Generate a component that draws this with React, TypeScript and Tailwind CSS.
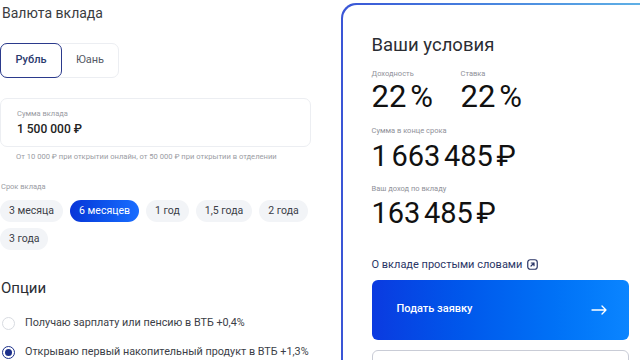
import React from "react";

const chips = ["3 месяца", "6 месяцев", "1 год", "1,5 года", "2 года", "3 года"];

export default function App() {
  return (
    <div
      className="w-[640px] h-[360px] overflow-hidden bg-white flex items-start text-[#2b2d33]"
      style={{ fontFamily: "Roboto, 'Noto Sans', sans-serif" }}
    >
      {/* Left column */}
      <div className="w-[312px] shrink-0 flex flex-col [&>*]:shrink-0">
        <div className="mt-[3px] ml-[2px] text-[14px] leading-[20px] text-[#3a3b40]">Валюта вклада</div>
        <div className="mt-[20px] flex w-[119px] h-[35px] rounded-[7px] border border-[#eceef2]">
          <div className="w-[62px] h-[35px] -mt-px -ml-px rounded-[7px] border-[1.5px] border-[#2b3a8c] flex items-center justify-center text-[11px] font-medium text-[#2a3a6e]">
            Рубль
          </div>
          <div className="flex-1 flex items-center justify-center text-[11px] text-[#555a66]">Юань</div>
        </div>
        <div className="mt-[20px] h-[49px] w-[311px] rounded-[7px] border border-[#eceef2] px-[16px] pt-[10px]">
          <div className="text-[7.5px] leading-[10px] text-[#9a9ca3]">Сумма вклада</div>
          <div className="mt-[3px] text-[12px] leading-[14px] font-medium text-[#222]">1 500 000 ₽</div>
        </div>
        <div className="mt-[5px] ml-[16px] text-[7.6px] leading-[9px] text-[#9a9ca3] whitespace-nowrap">
          От 10 000 ₽ при открытии онлайн, от 50 000 ₽ при открытии в отделении
        </div>
        <div className="mt-[21px] ml-[1px] text-[7.5px] leading-[10px] text-[#9a9ca3]">Срок вклада</div>
        <div className="mt-[8px] flex flex-wrap gap-x-[7px] gap-y-[6px] w-[312px]">
          {chips.map((c) => (
            <div
              key={c}
              className={
                c === "6 месяцев"
                  ? "h-[22px] px-[9px] rounded-full flex items-center text-[10.5px] text-white bg-gradient-to-r from-[#0a35d8] to-[#1a6dff]"
                  : "h-[22px] px-[9px] rounded-full flex items-center text-[10.5px] text-[#3b3e47] bg-[#f2f4f7]"
              }
            >
              {c}
            </div>
          ))}
        </div>
        <div className="mt-[28px] ml-[1px] text-[15px] leading-[20px] text-[#2b2d33]">Опции</div>
        <div className="mt-[18px] flex items-center gap-[10px] ml-[2px]">
          <div className="w-[13px] h-[13px] rounded-full border border-[#d8dbe1]" />
          <div className="text-[10.8px] leading-[14px] text-[#3b3e47] whitespace-nowrap">Получаю зарплату или пенсию в ВТБ +0,4%</div>
        </div>
        <div className="mt-[15px] flex items-center gap-[10px] ml-[2px]">
          <div className="w-[13px] h-[13px] rounded-full border-[1.5px] border-[#1b2f8a] flex items-center justify-center">
            <div className="w-[7px] h-[7px] rounded-full bg-[#1b2f8a]" />
          </div>
          <div className="text-[10.8px] leading-[14px] text-[#3b3e47] whitespace-nowrap">Открываю первый накопительный продукт в ВТБ +1,3%</div>
        </div>
      </div>

      {/* Right card */}
      <div className="ml-[29px] mt-[3px] w-[320px] h-[380px] shrink-0 rounded-[15px] p-[1.5px] bg-gradient-to-r from-[#3a55d6] to-[#63b6e6]">
        <div className="w-full h-full rounded-[14px] bg-white pl-[29px] pr-[10px] flex flex-col [&>*]:shrink-0">
          <div className="mt-[29px] text-[18.5px] leading-[22px] text-[#2b2d33]">Ваши условия</div>
          <div className="mt-[13px] flex">
            <div className="w-[89px]">
              <div className="text-[7.5px] leading-[10px] text-[#8f9199]">Доходность</div>
              <div className="mt-[2px] text-[31px] leading-[32px] text-[#111] tracking-[-1px]">{"22\u202F%"}</div>
            </div>
            <div>
              <div className="text-[7.5px] leading-[10px] text-[#8f9199]">Ставка</div>
              <div className="mt-[2px] text-[31px] leading-[32px] text-[#111] tracking-[-1px]">{"22\u202F%"}</div>
            </div>
          </div>
          <div className="mt-[13px] text-[7.5px] leading-[10px] text-[#8f9199]">Сумма в конце срока</div>
          <div className="mt-[4px] text-[29px] leading-[32px] text-[#111] tracking-[-2px]">{"1\u202F663\u202F485\u202F₽"}</div>
          <div className="mt-[12px] text-[7.5px] leading-[10px] text-[#8f9199]">Ваш доход по вкладу</div>
          <div className="mt-[3px] text-[29px] leading-[32px] text-[#111] tracking-[-2px]">{"163\u202F485\u202F₽"}</div>
          <div className="mt-[29px] flex items-center gap-[5px] text-[11px] leading-[14px] text-[#2a3566]">
            <span>О вкладе простыми словами</span>
            <svg width="11" height="11" viewBox="0 0 11 11" fill="none">
              <rect x="0.75" y="0.75" width="9.5" height="9.5" rx="2.5" stroke="#2a3566" strokeWidth="1.2" />
              <path d="M4 7L7 4M4.3 4H7V6.7" stroke="#2a3566" strokeWidth="1.2" strokeLinecap="round" strokeLinejoin="round" />
            </svg>
          </div>
          <div className="mt-[8px] w-[257px] h-[60px] rounded-[6px] bg-gradient-to-r from-[#0b3ae0] to-[#0b85ff] flex items-center justify-between pl-[25px] pr-[22px]">
            <span className="text-[11px] font-medium text-white">Подать заявку</span>
            <svg width="16" height="10" viewBox="0 0 16 10" fill="none">
              <path d="M1 5H15M11 1L15 5L11 9" stroke="white" strokeWidth="1.3" strokeLinecap="round" strokeLinejoin="round" />
            </svg>
          </div>
          <div className="mt-[10px] w-[257px] h-[40px] rounded-[6px] border border-[#c9ccd6]" />
        </div>
      </div>
    </div>
  );
}
